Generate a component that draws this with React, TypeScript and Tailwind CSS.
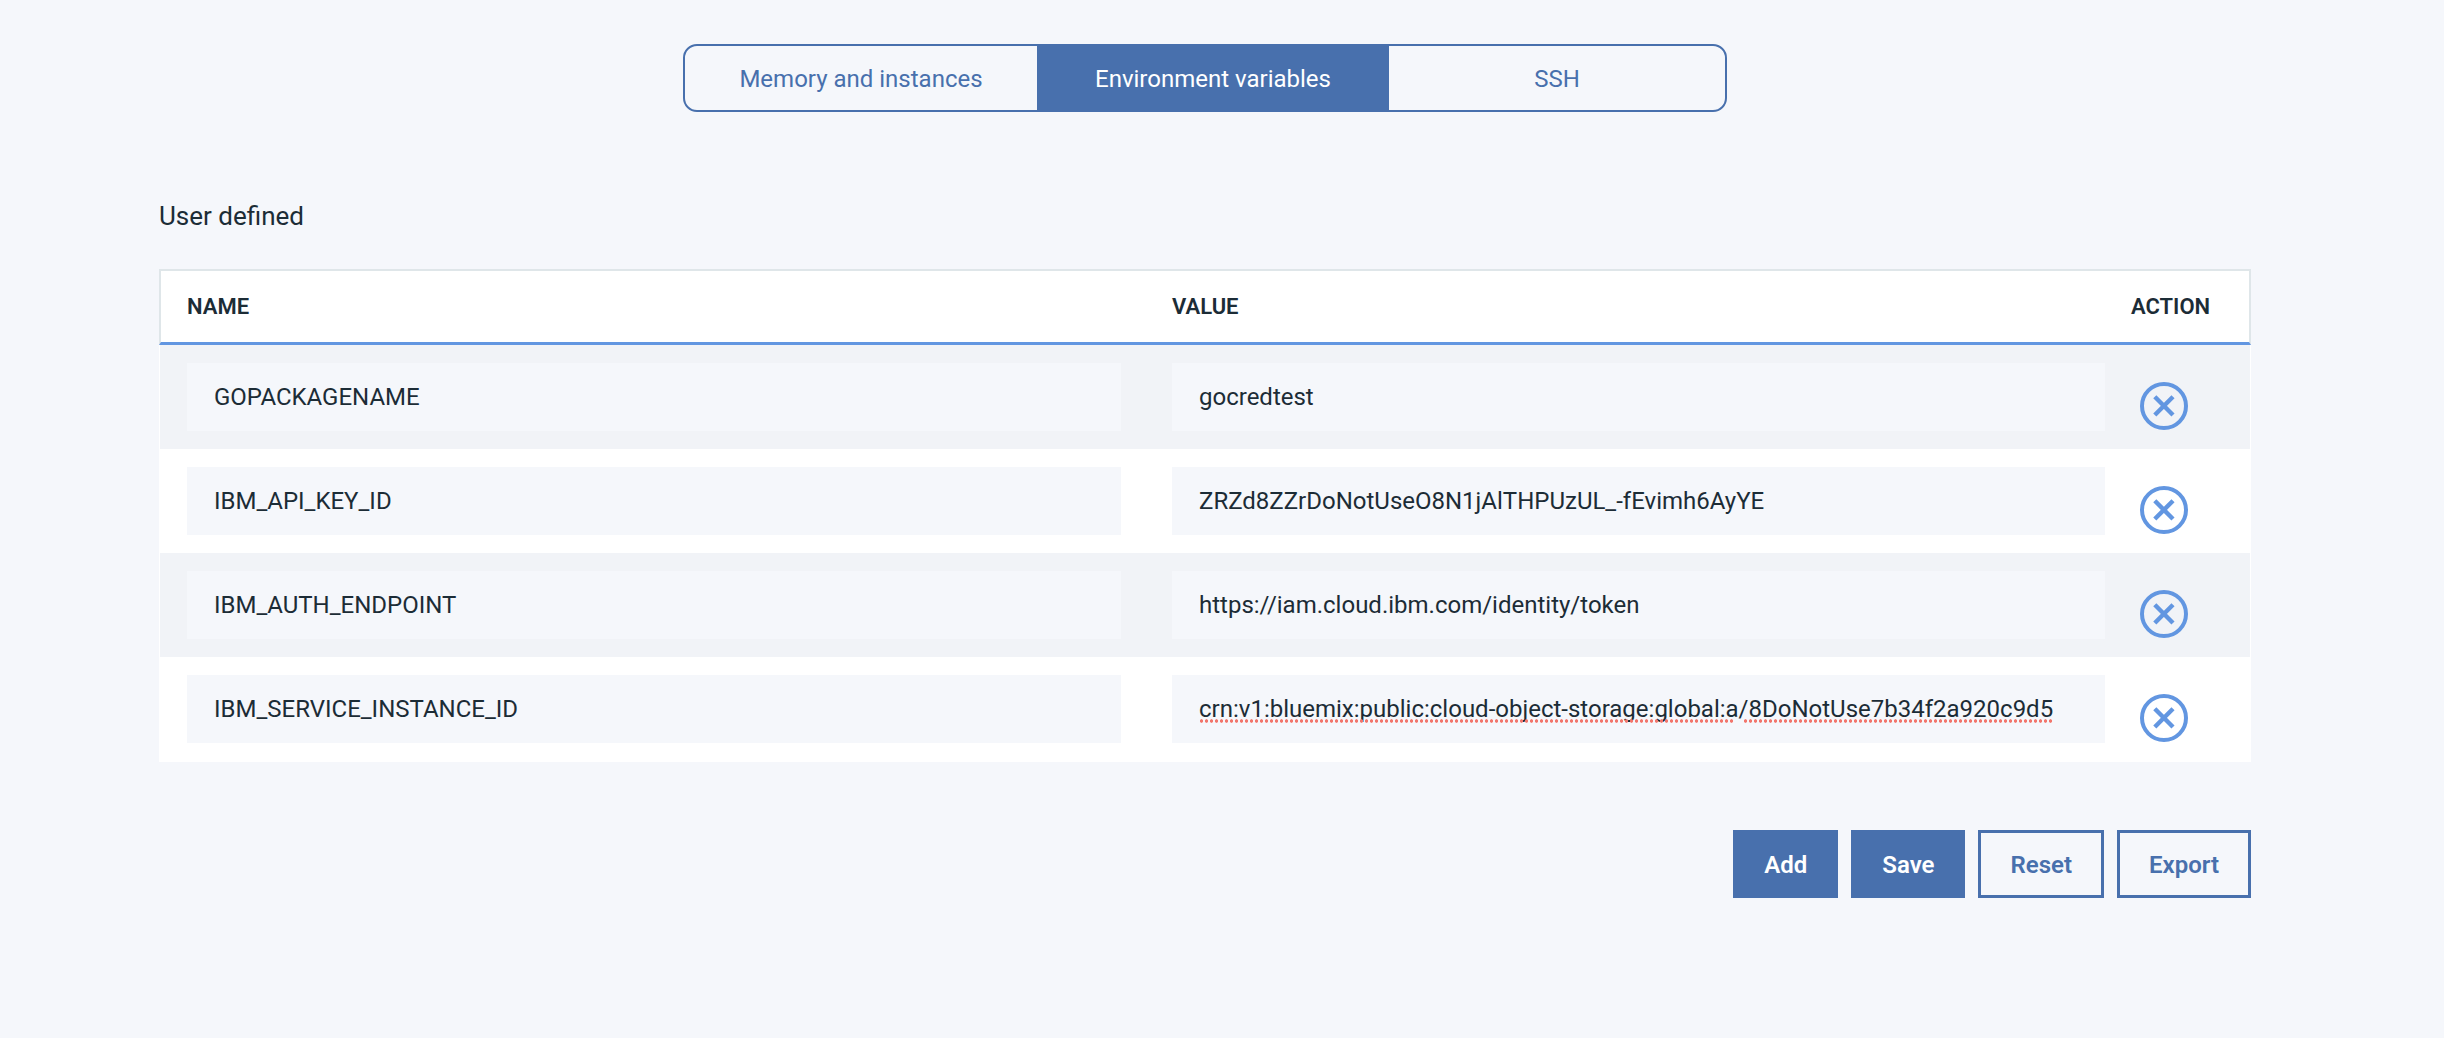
import { useState } from 'react'

const tabs = [
  { label: 'Memory and instances', width: 'w-88' },
  { label: 'Environment variables', width: 'w-88' },
  { label: 'SSH', width: 'w-84' },
]

const variables = [
  { name: 'GOPACKAGENAME', value: 'gocredtest' },
  { name: 'IBM_API_KEY_ID', value: 'ZRZd8ZZrDoNotUseO8N1jAlTHPUzUL_-fEvimh6AyYE' },
  { name: 'IBM_AUTH_ENDPOINT', value: 'https://iam.cloud.ibm.com/identity/token' },
  {
    name: 'IBM_SERVICE_INSTANCE_ID',
    value: 'crn:v1:bluemix:public:cloud-object-storage:global:a/8DoNotUse7b34f2a920c9d5',
    misspelled: true,
  },
]

function Field({ label, value, misspelled }: { label: string; value: string; misspelled?: boolean }) {
  return (
    <div className="relative">
      <input
        aria-label={label}
        defaultValue={value}
        spellCheck={false}
        className="block h-[68px] w-full bg-[#f5f7fb] px-[27px] text-2xl text-[#1c2c36] outline-none focus:ring-2 focus:ring-[#6296e1]"
      />
      {misspelled && (
        <div aria-hidden="true" className="pointer-events-none absolute inset-x-[27px] bottom-[20px] flex h-[4px] gap-[10px]">
          <SpellingDots className="w-[534px]" />
          <SpellingDots className="w-[310px]" />
        </div>
      )}
    </div>
  )
}

function SpellingDots({ className }: { className: string }) {
  return (
    <span
      className={`${className} bg-[radial-gradient(circle_at_center,#f2766c_1.4px,transparent_2px)] bg-[length:5px_4px] bg-repeat-x`}
    />
  )
}

function RemoveIcon() {
  return (
    <svg viewBox="0 0 48 48" className="size-12" fill="none" stroke="currentColor" strokeWidth="4" aria-hidden="true">
      <circle cx="24" cy="24" r="22" />
      <path d="M14.8 14.8 33 33M33 14.8 14.8 33" strokeWidth="4.4" />
    </svg>
  )
}

export default function App() {
  const [active, setActive] = useState(1)

  return (
    <main className="min-h-screen bg-[#f5f7fb] pt-11 pr-[193px] pl-[159px] font-[Roboto,sans-serif] text-[#1c2c36]">
      <nav className="mx-auto flex w-fit overflow-hidden rounded-[14px] border-2 border-[#4870ad]">
        {tabs.map((tab, i) => (
          <button
            key={tab.label}
            type="button"
            aria-pressed={i === active}
            onClick={() => setActive(i)}
            className={`${tab.width} h-16 cursor-pointer pt-0.5 text-2xl ${
              i === active ? 'bg-[#4870ad] text-white' : 'text-[#4870ad]'
            }`}
          >
            {tab.label}
          </button>
        ))}
      </nav>

      <h2 className="mt-22 text-[26px] leading-8">User defined</h2>

      <table className="mt-[37px] w-full table-fixed border-separate border-spacing-0 border-b border-white text-left">
        <colgroup>
          <col />
          <col />
          <col className="w-[120px]" />
        </colgroup>
        <thead className="bg-white text-[22px]">
          <tr>
            <th className="h-[76px] border-t-2 border-b-3 border-l-2 border-t-[#dfe6e9] border-b-[#6296e1] border-l-[#dfe6e9] pl-[26px] font-semibold">
              NAME
            </th>
            <th className="border-t-2 border-b-3 border-t-[#dfe6e9] border-b-[#6296e1] pl-[27px] font-semibold">VALUE</th>
            <th className="border-t-2 border-r-2 border-b-3 border-t-[#dfe6e9] border-r-[#dfe6e9] border-b-[#6296e1] font-semibold">
              ACTION
            </th>
          </tr>
        </thead>
        <tbody className="align-top">
          {variables.map((v) => (
            <tr key={v.name} className="bg-white odd:bg-[#f1f3f7]">
              <td className="border-l border-white pt-[18px] pr-6 pb-[18px] pl-[27px]">
                <Field label="Name" value={v.name} />
              </td>
              <td className="pt-[18px] pr-[26px] pb-[18px] pl-[27px]">
                <Field label={`Value of ${v.name}`} value={v.value} misspelled={v.misspelled} />
              </td>
              <td className="border-r border-white pt-[37px] pl-[9px]">
                <button type="button" aria-label={`Remove ${v.name}`} className="block cursor-pointer text-[#6296e1]">
                  <RemoveIcon />
                </button>
              </td>
            </tr>
          ))}
        </tbody>
      </table>

      <div className="mt-17 flex justify-end gap-[13px] text-2xl font-semibold">
        <button type="button" className="h-17 cursor-pointer border-3 border-[#4870ad] bg-[#4870ad] px-7 pt-0.5 text-white">
          Add
        </button>
        <button type="button" className="h-17 cursor-pointer border-3 border-[#4870ad] bg-[#4870ad] px-7 pt-0.5 text-white">
          Save
        </button>
        <button type="button" className="h-17 cursor-pointer border-3 border-[#4870ad] px-[29px] pt-0.5 text-[#4870ad]">
          Reset
        </button>
        <button type="button" className="h-17 cursor-pointer border-3 border-[#4870ad] px-[29px] pt-0.5 text-[#4870ad]">
          Export
        </button>
      </div>
    </main>
  )
}
